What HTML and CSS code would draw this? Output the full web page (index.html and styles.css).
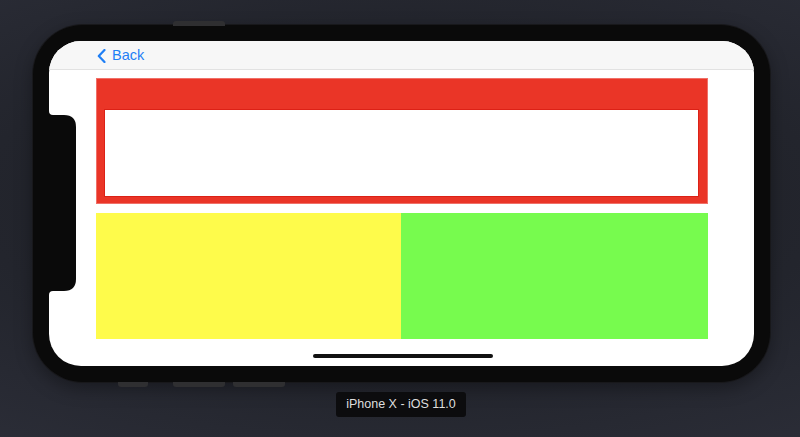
FILE: index.html
```html
<!DOCTYPE html>
<html>
<head>
<meta charset="utf-8">
<link rel="stylesheet" href="styles.css">
</head>
<body>
<div class="stage">
  <div class="phone">
    <span class="btn btn-top"></span>
    <span class="btn btn-b1"></span>
    <span class="btn btn-b2"></span>
    <span class="btn btn-b3"></span>
    <div class="screen">
      <svg class="notch" width="28" height="184" viewBox="0 0 28 184">
        <path d="M0 0 Q0 4 4 4 L15 4 Q27 4 27 16 L27 168 Q27 180 15 180 L4 180 Q0 180 0 184 Z" fill="#0a0a0a"/>
      </svg>
      <div class="navbar">
        <a class="back">
          <svg class="chev" width="9" height="14" viewBox="0 0 9 14"><path d="M7.5 1 L1.8 7 L7.5 13" fill="none" stroke="#1f7ff5" stroke-width="2.2" stroke-linecap="round" stroke-linejoin="round"/></svg>
          <span>Back</span>
        </a>
      </div>
      <div class="content">
        <div class="redbox"><div class="inner"></div></div>
        <div class="row">
          <div class="yellow"></div>
          <div class="green"></div>
        </div>
      </div>
      <div class="home"></div>
    </div>
  </div>
  <div class="label">iPhone X - iOS 11.0</div>
</div>
</body>
</html>
```
FILE: styles.css
```css
html, body {
  margin: 0;
  padding: 0;
  width: 800px;
  height: 437px;
  overflow: hidden;
}
body {
  background: radial-gradient(ellipse 700px 300px at 400px 200px, #1c1d23 0%, #23252d 60%, #2b2d37 100%);
  font-family: "Liberation Sans", Arial, sans-serif;
}
.stage {
  display: flex;
  flex-direction: column;
  align-items: flex-start;
  padding: 25px 0 0 33px;
}
.phone {
  position: relative;
  width: 737px;
  height: 357px;
  box-sizing: border-box;
  padding: 16px;
  background: #0a0a0a;
  border-radius: 50px;
  box-shadow: 0 0 0 1px #18181b, 0 6px 18px rgba(0,0,0,0.35);
}
.btn {
  position: absolute;
  background: #2f2f31;
  height: 5px;
}
.btn-top { left: 140px; top: -4px; width: 52px; border-radius: 3px 3px 0 0; }
.btn-b1 { left: 85px; bottom: -5px; width: 30px; border-radius: 0 0 3px 3px; }
.btn-b2 { left: 140px; bottom: -5px; width: 52px; border-radius: 0 0 3px 3px; }
.btn-b3 { left: 200px; bottom: -5px; width: 52px; border-radius: 0 0 3px 3px; }
.screen {
  position: relative;
  width: 705px;
  height: 325px;
  background: #ffffff;
  border-radius: 32px;
  overflow: hidden;
  display: flex;
  flex-direction: column;
}
.notch {
  position: absolute;
  left: 0;
  top: 70px;
  z-index: 2;
}
.navbar {
  height: 28px;
  flex: none;
  background: #f7f7f7;
  border-bottom: 1px solid #e2e2e2;
  display: flex;
  align-items: center;
  padding-left: 48px;
}
.back {
  display: flex;
  align-items: center;
  gap: 6px;
  color: #1f7ff5;
  font-size: 14.5px;
  line-height: 1;
  padding-top: 1px;
}
.chev { display: block; }
.content {
  padding: 8px 46px 0 47px;
  display: flex;
  flex-direction: column;
  gap: 9px;
}
.redbox {
  height: 126px;
  box-sizing: border-box;
  background: #ea3527;
  border: 1px solid #f07068;
  padding: 30px 8px 6px 7px;
  display: flex;
}
.inner {
  flex: 1;
  background: #ffffff;
  border: 1px solid #dc2116;
}
.row {
  display: grid;
  grid-template-columns: 305px 1fr;
  height: 126px;
}
.yellow { background: #fefb4b; }
.green { background: #77fb4e; }
.home {
  width: 180px;
  height: 4px;
  border-radius: 2px;
  background: #111;
  margin: 15px auto 0;
  position: relative;
  left: 1px;
}
.label {
  align-self: center;
  margin-top: 10px;
  margin-left: -33px;
  transform: translateX(1px);
  background: #0c0c0e;
  color: #dedede;
  font-size: 12.5px;
  font-weight: normal;
  padding: 5px 10px 6px;
  border-radius: 3px;
}
```
